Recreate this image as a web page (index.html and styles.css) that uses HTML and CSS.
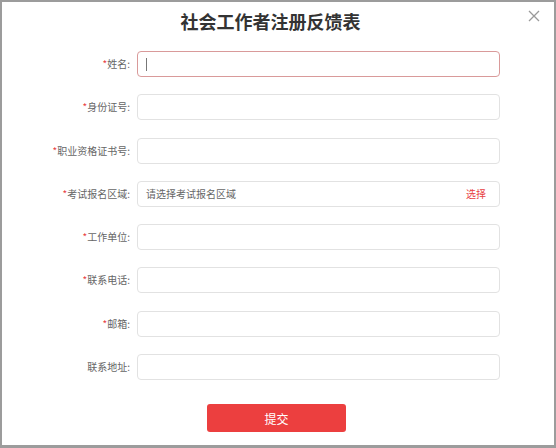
FILE: index.html
```html
<!DOCTYPE html>
<html lang="zh">
<head>
<meta charset="utf-8">
<link rel="stylesheet" href="styles.css">
</head>
<body>
<div class="dialog">
  <div class="title">社会工作者注册反馈表</div>
  <div class="close"><svg width="12" height="12" viewBox="0 0 12 12"><path d="M1 1L11 11M11 1L1 11" stroke="#9a9a9a" stroke-width="1.3" fill="none"/></svg></div>
  <div class="form">
    <div class="label"><span class="req">*</span>姓名:</div>
    <div class="field focus"><span class="caret"></span></div>
    <div class="label"><span class="req">*</span>身份证号:</div>
    <div class="field"></div>
    <div class="label"><span class="req">*</span>职业资格证书号:</div>
    <div class="field"></div>
    <div class="label"><span class="req">*</span>考试报名区域:</div>
    <div class="field select"><span class="ph">请选择考试报名区域</span><span class="pick">选择</span></div>
    <div class="label"><span class="req">*</span>工作单位:</div>
    <div class="field"></div>
    <div class="label"><span class="req">*</span>联系电话:</div>
    <div class="field"></div>
    <div class="label"><span class="req">*</span>邮箱:</div>
    <div class="field"></div>
    <div class="label">联系地址:</div>
    <div class="field"></div>
  </div>
  <div class="actions"><button class="submit">提交</button></div>
</div>
</body>
</html>
```
FILE: styles.css
```css
* { box-sizing: border-box; }
html, body { margin: 0; padding: 0; background: #fff; }
body { font-family: "Microsoft YaHei", "Noto Sans CJK SC", sans-serif; }
.dialog {
  position: relative;
  width: 556px;
  height: 448px;
  border: 2px solid #9c9c9c;
  border-bottom-width: 3px;
  background: #fff;
}
.title {
  text-align: center;
  font-size: 18px;
  font-weight: bold;
  color: #333;
  padding-top: 7px;
  height: 49px;
  line-height: 24px;
  padding-right: 15px;
}
.close {
  position: absolute;
  top: 8px;
  right: 14px;
  width: 12px;
  height: 12px;
  line-height: 0;
}
.form {
  display: grid;
  grid-template-columns: 129px 363px;
  column-gap: 6px;
  row-gap: 17.3px;
}
.label {
  text-align: right;
  font-size: 10px;
  color: #666;
  line-height: 26px;
  height: 26px;
  padding-right: 1px;
}
.req { color: #e8403f; }
.field {
  height: 26px;
  border: 1px solid #e2e2e2;
  border-radius: 4px;
  display: flex;
  align-items: center;
  padding: 0 8px;
  font-size: 10px;
}
.field.focus { border-color: #d99a9a; }
.caret { width: 1px; height: 13px; background: #777; }
.select { justify-content: space-between; padding-right: 13px; }
.ph { color: #666; }
.pick { color: #e8403f; }
.actions {
  display: flex;
  justify-content: center;
  padding-top: 24px;
  padding-right: 3px;
}
.submit {
  width: 139px;
  height: 28px;
  border: 0;
  border-radius: 3px;
  background: #ec3f3f;
  color: #fff;
  font-family: inherit;
  font-size: 12px;
}
```
